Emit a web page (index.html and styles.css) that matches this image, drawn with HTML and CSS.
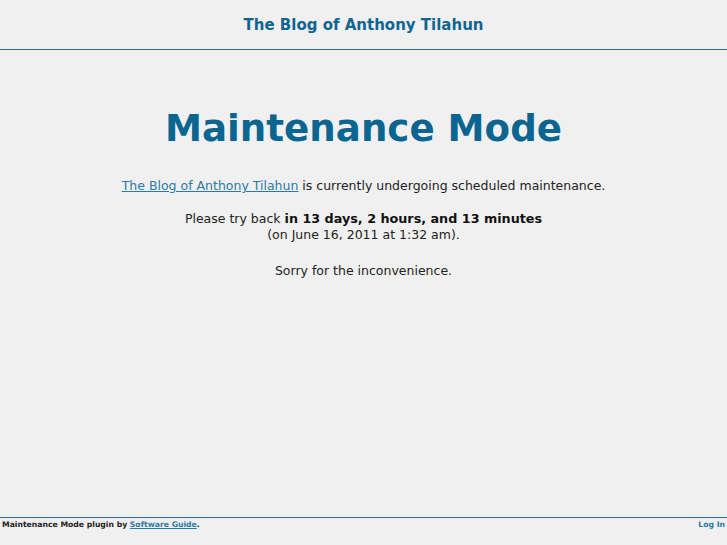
FILE: index.html
```html
<!DOCTYPE html>
<html>
<head>
<meta charset="utf-8">
<link rel="stylesheet" href="styles.css">
</head>
<body>
<div class="page">
  <div class="header"><a class="site" href="#">The Blog of Anthony Tilahun</a></div>
  <div class="main">
    <h1 class="title">Maintenance Mode</h1>
    <p class="line first"><a class="link" href="#">The Blog of Anthony Tilahun</a> is currently undergoing scheduled maintenance.</p>
    <p class="line"><span>Please try back </span><strong class="em">in 13 days, 2 hours, and 13 minutes</strong><br>(on June 16, 2011 at 1:32 am).</p>
    <p class="line">Sorry for the inconvenience.</p>
  </div>
  <div class="footer">
    <span class="credit">Maintenance Mode plugin by <a class="flink" href="#">Software Guide</a>.</span>
    <a class="login" href="#">Log In</a>
  </div>
</div>
</body>
</html>
```
FILE: styles.css
```css
html, body { margin: 0; padding: 0; }
body {
  background: #f0f0f0;
  font-family: "DejaVu Sans", sans-serif;
  color: #222;
}
.page {
  min-height: 100vh;
  display: flex;
  flex-direction: column;
}
.header {
  height: 49px;
  border-bottom: 1px solid #306a8c;
  display: flex;
  align-items: center;
  justify-content: center;
}
.site {
  color: #0f6590;
  font-weight: bold;
  font-size: 15px;
  text-decoration: none;
}
.main {
  flex: 1;
  text-align: center;
  padding-top: 56px;
}
.title {
  margin: 0 0 28px 0;
  font-size: 37.2px;
  color: #0a6591;
  line-height: 44px;
}
.line {
  margin: 0 0 20px 0;
  font-size: 12.5px;
  line-height: 16px;
}
.first { margin-bottom: 17px; }
.link { color: #2a7aa6; }
.em { color: #111; font-size: 12.75px; }
.footer {
  height: 25px;
  border-top: 1px solid #306a8c;
  display: flex;
  justify-content: space-between;
  padding: 2px 2px 0 2px;
  font-size: 7.7px;
  font-weight: bold;
  line-height: 10px;
}
.credit { color: #222; }
.flink { color: #2a7aa6; }
.login { color: #2a7aa6; text-decoration: none; }
```
